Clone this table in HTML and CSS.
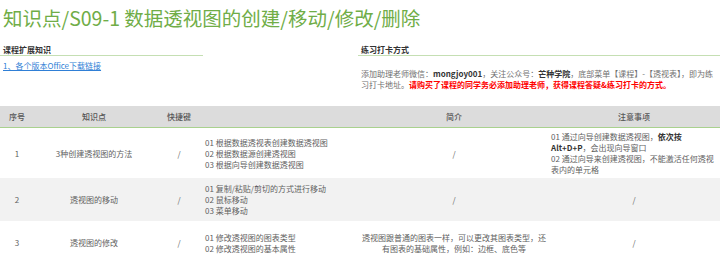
FILE: index.html
```html
<!DOCTYPE html>
<html lang="zh-CN">
<head>
<meta charset="utf-8">
<link rel="stylesheet" href="styles.css">
</head>
<body>
<h1 class="title">知识点/S09-1 数据透视图的创建/移动/修改/删除</h1>
<div class="info">
  <div class="info-left">
    <div class="sec-head">课程扩展知识</div>
    <a class="dl-link" href="#">1、各个版本Office下载链接</a>
  </div>
  <div class="info-right">
    <div class="sec-head">练习打卡方式</div>
    <p class="note">添加助理老师微信：<b>mongjoy001</b>，关注公众号：<b>芒种学院</b>，底部菜单【课程】-【透视表】，即为练习打卡地址。<span class="warn">请购买了课程的同学务必添加助理老师，获得课程答疑&amp;练习打卡的方式。</span></p>
  </div>
</div>
<table class="grid">
  <colgroup>
    <col class="c-no"><col class="c-kp"><col class="c-key"><col class="c-items"><col class="c-desc"><col class="c-tip">
  </colgroup>
  <thead>
    <tr><th>序号</th><th>知识点</th><th>快捷键</th><th></th><th>简介</th><th>注意事项</th></tr>
  </thead>
  <tbody>
    <tr>
      <td>1</td><td>3种创建透视图的方法</td><td>/</td>
      <td class="left">01 根据数据透视表创建数据透视图<br>02 根据数据源创建透视图<br>03 根据向导创建数据透视图</td>
      <td>/</td>
      <td class="left">01 通过向导创建数据透视图，<b>依次按Alt+D+P</b>，会出现向导窗口<br>02 通过向导来创建透视图，不能激活任何透视表内的单元格</td>
    </tr>
    <tr class="alt">
      <td>2</td><td>透视图的移动</td><td>/</td>
      <td class="left">01 复制/粘贴/剪切的方式进行移动<br>02 鼠标移动<br>03 菜单移动</td>
      <td>/</td><td>/</td>
    </tr>
    <tr>
      <td>3</td><td>透视图的修改</td><td>/</td>
      <td class="left">01 修改透视图的图表类型<br>02 修改透视图的基本属性</td>
      <td>透视图跟普通的图表一样，可以更改其图表类型，还有图表的基础属性，例如：边框、底色等</td>
      <td>/</td>
    </tr>
  </tbody>
</table>
</body>
</html>
```
FILE: styles.css
```css
html, body {
  margin: 0;
  padding: 0;
  background: #ffffff;
  font-family: "Noto Sans CJK SC", "Noto Sans", sans-serif;
  color: #595959;
  width: 720px;
  overflow: hidden;
}
.title {
  margin: 0;
  padding: 5px 0 0 3px;
  height: 31px;
  font-size: 19.5px;
  line-height: 26px;
  font-weight: 400;
  color: #70ad47;
  white-space: nowrap;
}
.info {
  display: flex;
  margin-top: 8px;
  height: 61px;
}
.info-left {
  width: 203px;
  flex: none;
}
.info-right {
  flex: 1;
  margin-left: 155px;
}
.sec-head {
  font-size: 8px;
  line-height: 11px;
  font-weight: 700;
  color: #333;
  padding-left: 3px;
  border-bottom: 1px solid #c5dfb3;
  height: 11px;
}
.dl-link {
  display: block;
  margin-top: 4px;
  padding-left: 3px;
  font-size: 8px;
  line-height: 11px;
  color: #2f7fd6;
  text-decoration: underline;
}
.note {
  margin: 12px 0 0;
  padding: 0 4px 0 3px;
  font-size: 8px;
  line-height: 11px;
  color: #707070;
}
.note b {
  color: #333;
  font-weight: 700;
  line-height: 1;
}
.warn {
  color: #ff0000;
  font-weight: 700;
  line-height: 1;
}
.grid {
  width: 720px;
  border-collapse: collapse;
  table-layout: fixed;
  margin-top: 1px;
  font-size: 8px;
  line-height: 11px;
}
.c-no { width: 34px; }
.c-kp { width: 120px; }
.c-key { width: 50px; }
.c-items { width: 156px; }
.c-desc { width: 188px; }
.c-tip { width: 172px; }
.grid th {
  background: #dcdcdc;
  color: #555;
  font-weight: 500;
  height: 21px;
  padding: 0;
  border-bottom: 1.5px solid #a9d18e;
}
.grid td {
  text-align: center;
  vertical-align: middle;
  padding: 3px 2px;
  height: 37px;
  color: #616161;
}
.grid td.left {
  text-align: left;
  padding-left: 1px;
}
.grid td:last-child.left {
  padding-left: 3px;
  padding-right: 4px;
}
.grid td b {
  color: #333;
  font-weight: 700;
  line-height: 1;
}
.grid tr.alt td {
  background: #f2f2f2;
}
```
